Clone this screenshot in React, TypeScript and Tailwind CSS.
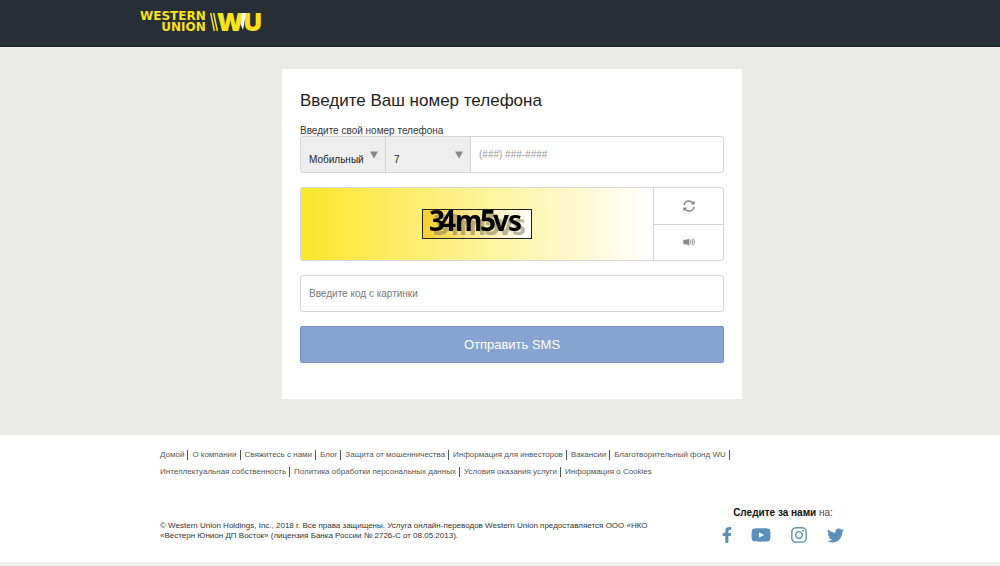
import { FaFacebookF, FaInstagram, FaTwitter, FaYoutube } from 'react-icons/fa';

const linkRows = [
  [
    'Домой',
    'О компании',
    'Свяжитесь с нами',
    'Блог',
    'Защита от мошенничества',
    'Информация для инвесторов',
    'Вакансии',
    'Благотворительный фонд WU',
  ],
  [
    'Интеллектуальная собственность',
    'Политика обработки персональных данных',
    'Условия оказания услуги',
    'Информация о Cookies',
  ],
];

function Logo() {
  return (
    <a href="#" aria-label="Western Union" className="flex items-center text-[#f8e21a]">
      <span className="flex flex-col text-right font-['DejaVu_Sans'] text-[12px] leading-[11px] font-bold">
        <span>WESTERN</span>
        <span>UNION</span>
      </span>
      <svg className="ml-1 h-5 w-2" viewBox="0 0 8 20" fill="none" stroke="currentColor" aria-hidden="true">
        <path d="M.6 1 4.4 19M3.6 1 7.4 19" strokeWidth="1.5" />
      </svg>
      <span className="relative -ml-px font-[Inter] text-[25px] leading-5 font-black">
        WU
        <svg className="absolute top-0 left-[21px] h-5 w-2" viewBox="0 0 8 20" aria-hidden="true">
          <path d="M4 1H8L5 18 2.5 12Z" fill="#fff" />
        </svg>
      </span>
    </a>
  );
}

function Arrow() {
  return (
    <svg className="pointer-events-none absolute top-[14px] right-[7px] h-2 w-2" viewBox="0 0 8 8" aria-hidden="true">
      <path d="M0 .5H8L4 7.5Z" fill="#858585" />
    </svg>
  );
}

function Captcha() {
  return (
    <svg className="h-[30px] w-[110px] overflow-visible" viewBox="0 0 110 30" role="img" aria-label="Код с картинки">
      <defs>
        <linearGradient id="plate">
          <stop offset="0" stopColor="#f9cf2e" />
          <stop offset="0.6" stopColor="#fbeeb0" />
          <stop offset="1" stopColor="#fff" />
        </linearGradient>
      </defs>
      <rect x=".5" y=".5" width="109" height="29" fill="url(#plate)" stroke="#222" />
      <text
        x="7 18 33 58 71 86"
        y="22"
        className="font-['Noto_Sans'] text-[28px] font-bold drop-shadow-[4px_4px_0px_#77705a80]"
      >
        34m5vs
      </text>
    </svg>
  );
}

function PhoneForm() {
  return (
    <form className="w-full max-w-[460px] bg-white px-[18px] pt-5 pb-9">
      <h1 className="text-[17px] leading-6 text-[#222]">Введите Ваш номер телефона</h1>
      <label htmlFor="phone" className="mt-3 block text-[10px] leading-[11px] text-[#333]">
        Введите свой номер телефона
      </label>
      <div className="flex h-[37px] overflow-hidden rounded-[3px] border border-[#d4d4d4]">
        <div className="relative w-[85px] border-r border-[#d4d4d4]">
          <select aria-label="Тип телефона" className="h-full w-full appearance-none bg-[#eee] pt-[10px] pl-2 text-[10px] text-[#222]">
            <option>Мобильный</option>
          </select>
          <Arrow />
        </div>
        <div className="relative w-[85px] border-r border-[#d4d4d4]">
          <select aria-label="Код страны" className="h-full w-full appearance-none bg-[#eee] pt-[10px] pl-2 text-[10px] text-[#222]">
            <option>7</option>
          </select>
          <Arrow />
        </div>
        <input
          id="phone"
          type="tel"
          placeholder="(###) ###-####"
          className="min-w-0 flex-1 px-2 text-[10px] placeholder:text-[#999]"
        />
      </div>

      <div className="mt-[14px] flex h-[74px] overflow-hidden rounded-[3px] border border-[#d4d4d4]">
        <div className="flex flex-1 items-center justify-center bg-linear-to-r/srgb from-[#fae62b] to-white">
          <Captcha />
        </div>
        <div className="flex w-[70px] flex-col border-l border-[#d4d4d4]">
          <button type="button" aria-label="Обновить" className="flex flex-1 items-center justify-center border-b border-[#d4d4d4]">
            <svg className="h-3 w-3" viewBox="0 0 12 12" fill="none" stroke="#858585" strokeWidth="1.4" aria-hidden="true">
              <path d="M1 5.2C1.4 2.8 3.5 1 6 1c1.8 0 3.2.8 4.1 2.2M11 6.8C10.6 9.2 8.5 11 6 11c-1.8 0-3.2-.8-4.1-2.2" />
              <path d="M11.6.6V4.6H7.6ZM.4 11.4V7.4H4.4Z" fill="#858585" stroke="none" />
            </svg>
          </button>
          <button type="button" aria-label="Прослушать" className="flex flex-1 items-center justify-center">
            <svg className="h-2 w-3" viewBox="0 0 12 8" fill="none" stroke="#8a8a8a" strokeWidth=".9" aria-hidden="true">
              <path d="M.3 1.8H2.8L6.3.5V7.5L2.8 6.2H.3Z" fill="#8a8a8a" stroke="none" />
              <path d="M7.3 2.2C8.1 3.2 8.1 4.8 7.3 5.8M8.8 1.2C10 2.8 10 5.2 8.8 6.8M10.2.5C11.8 2.6 11.8 5.4 10.2 7.5" />
            </svg>
          </button>
        </div>
      </div>

      <input
        type="text"
        aria-label="Введите код с картинки"
        placeholder="Введите код с картинки"
        className="mt-[14px] h-[37px] w-full rounded-[3px] border border-[#d4d4d4] px-2 text-[10px] placeholder:text-[#777]"
      />
      <button
        type="button"
        className="mt-[14px] h-[37px] w-full rounded-[2px] border border-[#7392c0] bg-[#86a4cf] text-[13px] text-white"
      >
        Отправить SMS
      </button>
    </form>
  );
}

function Footer() {
  return (
    <footer className="border-b-4 border-[#eee] bg-white pt-[15px] pb-[19px] pl-6">
      <div className="mx-auto max-w-[744px] px-5">
        <nav className="text-[8px] leading-[10px] text-[#555]">
          {linkRows.map((row, i) => (
            <ul key={i} className="mb-[7px] flex flex-wrap">
              {row.map((link, j) => (
                <li
                  key={link}
                  className={i === 1 && j === row.length - 1 ? '' : 'mr-1 border-r border-[#555] pr-[3px]'}
                >
                  <a href="#">{link}</a>
                </li>
              ))}
            </ul>
          ))}
        </nav>
        <div className="mt-[30px] flex justify-between pr-5">
          <p className="mt-[14px] max-w-[500px] text-[8px] leading-[10px] text-[#333]">
            © Western Union Holdings, Inc., 2018 г. Все права защищены. Услуга онлайн-переводов Western Union
            предоставляется ООО «НКО «Вестерн Юнион ДП Восток» (лицензия Банка России № 2726-С от 08.05.2013).
          </p>
          <div className="w-[122px] text-center">
            <p className="text-[10px] leading-3 text-[#444]">
              <strong className="text-[#111]">Следите за нами</strong> на:
            </p>
            <div className="mt-2 flex h-4 items-center justify-between text-[#5a8fba]">
              <a href="#" aria-label="Facebook">
                <FaFacebookF className="h-4 w-[10px]" />
              </a>
              <a href="#" aria-label="YouTube">
                <FaYoutube className="h-[18px] w-5" />
              </a>
              <a href="#" aria-label="Instagram">
                <FaInstagram className="h-[18px] w-[18px]" />
              </a>
              <a href="#" aria-label="Twitter">
                <FaTwitter className="h-[17px] w-[17px]" />
              </a>
            </div>
          </div>
        </div>
      </div>
    </footer>
  );
}

export default function App() {
  return (
    <div className="min-h-screen bg-[#eaebe6] font-['Liberation_Sans',Arial,sans-serif]">
      <header className="h-[47px] border-b border-[#20252b] bg-[#282e36] pt-[11px] pl-6">
        <div className="mx-auto flex max-w-[744px]">
          <Logo />
        </div>
      </header>
      <main className="flex justify-center pt-[22px] pb-9 pl-6">
        <PhoneForm />
      </main>
      <Footer />
    </div>
  );
}
